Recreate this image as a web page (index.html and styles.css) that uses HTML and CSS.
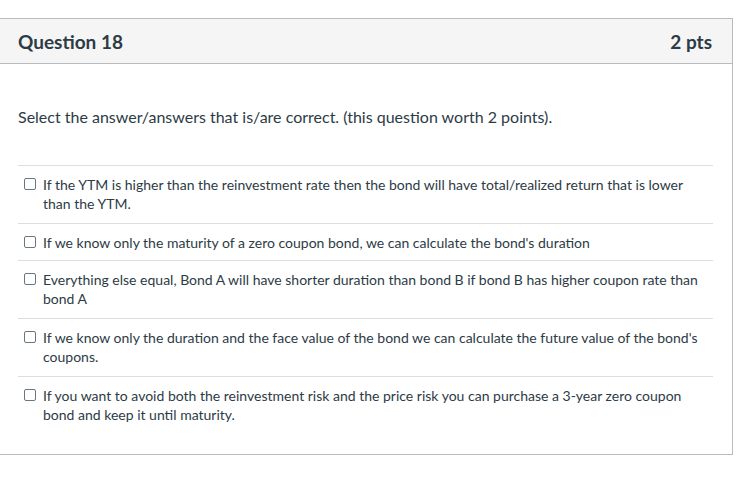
FILE: index.html
```html
<!DOCTYPE html>
<html>
<head>
<meta charset="utf-8">
<link rel="stylesheet" href="styles.css">
</head>
<body>
<div class="quiz">
  <div class="header">
    <div class="title">Question 18</div>
    <div class="pts">2 pts</div>
  </div>
  <div class="content">
    <p class="prompt">Select the answer/answers that is/are correct. (this question worth 2 points).</p>
    <div class="answers">
      <div class="answer wrap"><span class="box"></span><span class="label">If the YTM is higher than the reinvestment rate then the bond will have total/realized return that is lower than the YTM.</span></div>
      <div class="answer"><span class="box"></span><span class="label">If we know only the maturity of a zero coupon bond, we can calculate the bond's duration</span></div>
      <div class="answer wrap"><span class="box"></span><span class="label">Everything else equal, Bond A will have shorter duration than bond B if bond B has higher coupon rate than bond A</span></div>
      <div class="answer wrap"><span class="box"></span><span class="label">If we know only the duration and the face value of the bond we can calculate the future value of the bond's coupons.</span></div>
      <div class="answer wrap"><span class="box"></span><span class="label">If you want to avoid both the reinvestment risk and the price risk you can purchase a 3-year zero coupon bond and keep it until maturity.</span></div>
    </div>
  </div>
</div>
</body>
</html>
```
FILE: styles.css
```css
html, body {
  margin: 0;
  padding: 0;
  background: #ffffff;
}
body {
  font-family: Lato, "Open Sans", sans-serif;
  color: #2d3b45;
}
.quiz {
  margin-top: 18px;
  margin-left: -1px;
  width: 732px;
  border: 1px solid #b8bcbf;
}
.header {
  display: flex;
  justify-content: space-between;
  align-items: center;
  height: 44px;
  padding: 0 20px 0 18px;
  background: #f5f5f5;
  border-bottom: 1px solid #b8bcbf;
  font-weight: bold;
  font-size: 19px;
}
.content {
  padding: 0 19px 20px 18px;
}
.prompt {
  margin: 0;
  padding-top: 41px;
  font-size: 16px;
  line-height: 24px;
}
.answers {
  margin-top: 36px;
}
.answer {
  display: flex;
  align-items: flex-start;
  padding: 9px 6px 8px 6px;
  border-top: 1px solid #dcdfe1;
  font-size: 14px;
  line-height: 19px;
}
.answer.wrap {
  padding-bottom: 10px;
}
.box {
  flex: none;
  width: 10px;
  height: 10px;
  margin-top: 3px;
  margin-right: 7px;
  border: 1px solid #6b7780;
  border-radius: 2px;
  background: #fff;
}
.label {
  flex: 1;
}
```
